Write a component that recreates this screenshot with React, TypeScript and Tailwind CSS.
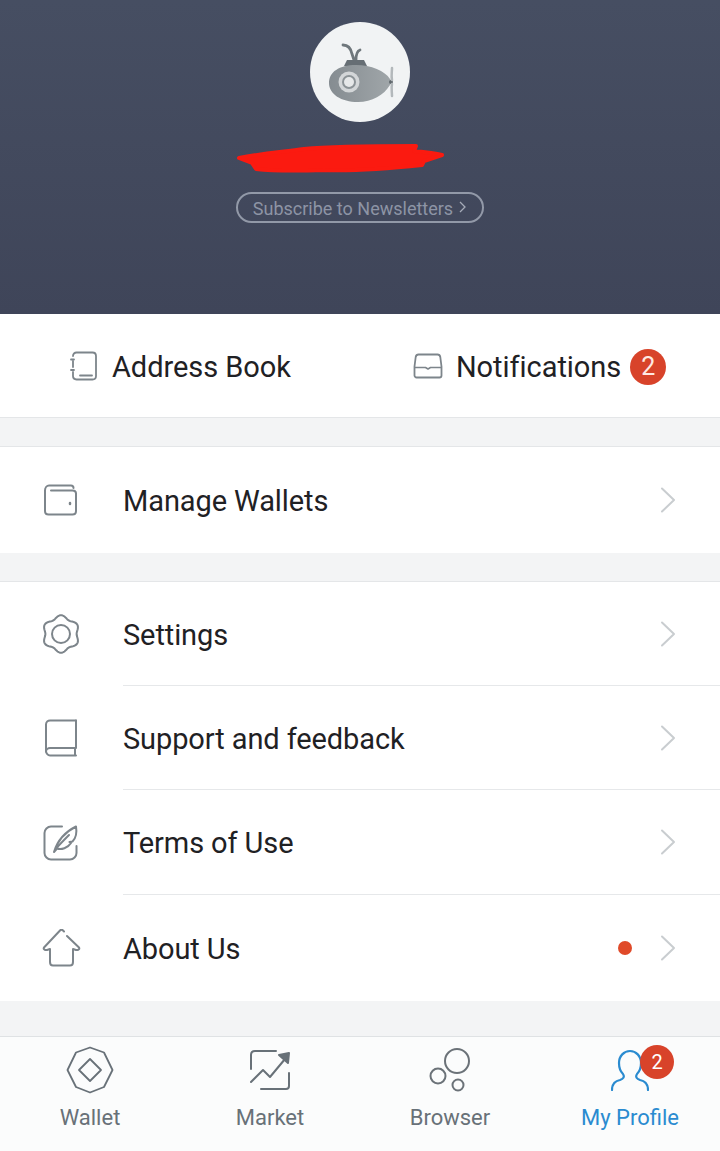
import type { ReactNode } from 'react';

const iconProps = {
    fill: 'none',
    stroke: '#7d858b',
    strokeWidth: 2,
    strokeLinecap: 'round' as const,
    strokeLinejoin: 'round' as const,
};

// six soft lobes, same outline as the settings gear
const gearPoints = Array.from({ length: 96 }, (_, i) => {
    const a = (i / 96) * Math.PI * 2;
    const r = 17.2 + 1.6 * Math.cos(6 * a);
    return `${(20 + r * Math.sin(a)).toFixed(2)},${(20 - r * Math.cos(a)).toFixed(2)}`;
}).join(' ');

function Submarine() {
    return (
        <svg width="74" height="70" viewBox="0 0 74 70">
            <defs>
                <linearGradient id="hull" x1="0" y1="0" x2="1" y2="0">
                    <stop offset="0" stopColor="#858c91" />
                    <stop offset="1" stopColor="#a0a6a9" />
                </linearGradient>
            </defs>
            <path d="M20 8c5 0 8 4 9 9l2 6M37 13c-3 1-4 4-4 10" fill="none" stroke="#6f777c" strokeWidth="2.800" strokeLinecap="round" />
            <path d="M24 23h17l3 6H21z" fill="#666e74" />
            <path d="M6 46c0-11 10-18 27-18 15 0 29 6 34 14 2 2 1 5 0 6-6 10-18 17-32 17C18 65 6 57 6 46z" fill="url(#hull)" />
            <circle cx="26" cy="45" r="10.500" fill="#d3d6d8" />
            <circle cx="26" cy="45" r="7" fill="#8c9397" />
            <circle cx="26" cy="45" r="5" fill="#e6e8e9" />
            <circle cx="68" cy="45" r="2" fill="#5f676c" />
            <path d="M69 43c-1-4 0-8 0-12M69 47c-1 4 0 8 0 12" fill="none" stroke="#b3b8bb" strokeWidth="2.500" strokeLinecap="round" />
        </svg>
    );
}

function Scribble() {
    return (
        <svg width="212" height="36" viewBox="0 0 212 36">
            <path d="M5 18C30 13 50 12 70 9c30-3 80-3 112-3l-2 5c10 1 20 2 28 4l-18 6-2 4c-38 4-68 6-98 5-30 1-50 1-68-1l-4-6z" fill="#fb1a10" stroke="#fb1a10" strokeWidth="4" strokeLinejoin="round" />
        </svg>
    );
}

function AddressIcon() {
    return (
        <svg width="30" height="30" viewBox="0 0 30 30" {...iconProps} strokeWidth={1.8}>
            <path d="M4 5c0-2 1.500-3.500 3.500-3.500h16c2 0 3.500 1.500 3.500 3.500v20c0 2-1.500 3.500-3.500 3.500h-16C5.500 28.500 4 27 4 25v-4M4 16v-6" />
            <path d="M11 24.500h12M2 8.500h3M2 19h3" />
        </svg>
    );
}

function InboxIcon() {
    return (
        <svg width="30" height="26" viewBox="0 0 30 26" {...iconProps} strokeWidth={1.8}>
            <path d="M5.500 1.500h19c1.500 0 2.500 1 2.800 2.500l1.200 9.500v9c0 1-1 2-2 2h-23c-1 0-2-1-2-2v-9L2.700 4c.3-1.500 1.300-2.500 2.800-2.500z" />
            <path d="M2 14.500h10.500l2.500 1.500 2.500-1.500H28" strokeWidth="1.500" />
        </svg>
    );
}

function WalletIcon() {
    return (
        <svg width="36" height="32" viewBox="0 0 36 32" {...iconProps}>
            <path d="M6 1.500h22c1.500 0 2.500 1 2.500 2.500M2 6.500C2 3.500 4 1.500 6 1.500M2 6.500V27c0 2 1.500 3.500 3.500 3.500h24c2 0 3.500-1.500 3.500-3.500V9.500c0-2-1.500-3-3.500-3H8" />
            <path d="M27 19v1" strokeWidth="2.500" />
        </svg>
    );
}

function GearIcon() {
    return (
        <svg width="40" height="40" viewBox="0 0 40 40" {...iconProps}>
            <polygon points={gearPoints} />
            <circle cx="20" cy="20" r="9" />
        </svg>
    );
}

function BookIcon() {
    return (
        <svg width="34" height="38" viewBox="0 0 34 38" {...iconProps}>
            <path d="M32 1.500H6c-2 0-4 1.500-4 4V32c0 2.500 2 4.500 4 4.500h26" />
            <path d="M32 1.500V29H6c-2 0-4 1.500-4 3.500M31 29v7" />
        </svg>
    );
}

function QuillIcon() {
    return (
        <svg width="36" height="36" viewBox="0 0 36 36" {...iconProps}>
            <path d="M19 1.500H8c-3.500 0-6.500 3-6.500 6.500v20c0 3.500 3 6.500 6.500 6.500h19c3.500 0 6.500-3 6.500-6.500V21" />
            <path d="M11 27c3-10 9-19 22-25.500 1 6-.5 12-3.500 15l-3 .5 1.500 1c-3 5-10 7-14 5.500L11 27zM13.500 23C18 18 22 14 26 10" />
        </svg>
    );
}

function HouseIcon() {
    return (
        <svg width="40" height="38" viewBox="0 0 40 38" {...iconProps}>
            <path d="M26 7l12 11.500c1 1.500-1 3-3 2.500l-3-1V33c0 2-1 3.500-3 3.500H12c-2 0-3-1.500-3-3.500V20l-3 1c-2 .5-4-1-3-2.500L19 1.500c1-1 2-1 3 0l1 1" />
        </svg>
    );
}

function Chevron() {
    return (
        <svg width="18" height="26" viewBox="0 0 18 26" fill="none" stroke="#c9cdd0" strokeWidth="2" strokeLinecap="round" strokeLinejoin="round">
            <path d="M3 1.500L15 13 3 24.500" />
        </svg>
    );
}

function Row({ icon, label, divider, dot, h }: { icon: ReactNode; label: string; divider?: boolean; dot?: boolean; h: string }) {
    return (
        <div className={`flex ${h}`}>
            <div className="w-[123px] flex items-center justify-center pr-[1px] shrink-0">
                <div className="w-[40px] flex justify-center mr-[1px]">{icon}</div>
            </div>
            <div className={`flex-1 flex items-center pr-[43px] ${divider ? 'border-b border-[#e6e8ea]' : ''}`}>
                <span className="text-[29px] tracking-[-0.1px] text-[#1f2124] flex-1 pt-[4px]">{label}</span>
                {dot && <span className="w-[14px] h-[14px] rounded-full bg-[#e04a29] mr-[27px]" />}
                <Chevron />
            </div>
        </div>
    );
}

function Tab({ icon, label, active, badge }: { icon: ReactNode; label: string; active?: boolean; badge?: boolean }) {
    return (
        <div className="flex-1 flex flex-col items-center pt-[8px]">
            <div className="relative h-[50px] flex items-center justify-center">
                {icon}
                {badge && (
                    <span className="absolute left-[29px] top-[0px] w-[34px] h-[34px] rounded-full bg-[#d8432a] text-white text-[20px] flex items-center justify-center">
                        2
                    </span>
                )}
            </div>
            <span className={`text-[22px] leading-[28px] mt-[9px] ${active ? 'text-[#2a8bd0]' : 'text-[#687178]'}`}>{label}</span>
        </div>
    );
}

export default function App() {
    return (
        <div className="w-[720px] h-[1151px] overflow-hidden flex flex-col bg-[#f3f4f5] font-['Roboto',sans-serif]">
            <div className="h-[314px] shrink-0 flex flex-col items-center pt-[22px] bg-gradient-to-b from-[#464e62] to-[#3f4559]">
                <div className="w-[100px] h-[100px] rounded-full bg-[#f1f3f4] flex items-center justify-center">
                    <Submarine />
                </div>
                <div className="mt-[18px] h-[36px] ml-[-40px]">
                    <Scribble />
                </div>
                <div className="mt-[16px] w-[248px] h-[31px] rounded-full border-2 border-[#9299a8] flex items-center justify-center gap-[6px] text-[18px] text-[#8d94a5]">
                    <span className="pt-[1px]">Subscribe to Newsletters</span>
                    <svg width="8" height="12" viewBox="0 0 8 12" fill="none" stroke="#a5abb8" strokeWidth="1.300" className="mb-[2px]">
                        <path d="M1 1l5 5-5 5" />
                    </svg>
                </div>
            </div>

            <div className="h-[104px] shrink-0 bg-white border-b border-[#e4e6e8] flex items-center text-[#1f2124] text-[29px]">
                <div className="flex items-center ml-[69px]">
                    <AddressIcon />
                    <span className="ml-[13px] pt-[4px] tracking-[-0.05px]">Address Book</span>
                </div>
                <div className="flex items-center ml-[122px]">
                    <InboxIcon />
                    <span className="ml-[13px] pt-[4px] tracking-[-0.05px]">Notifications</span>
                    <span className="ml-[9px] mt-[2px] w-[36px] h-[36px] rounded-full bg-[#d8432a] text-[#ffe9e3] text-[25px] flex items-center justify-center">2</span>
                </div>
            </div>

            <div className="h-[28px] shrink-0" />

            <div className="shrink-0 bg-white border-t border-[#e4e6e8]">
                <Row icon={<WalletIcon />} label="Manage Wallets" h="h-[106px]" />
            </div>

            <div className="h-[28px] shrink-0" />

            <div className="shrink-0 bg-white border-t border-[#e4e6e8]">
                <Row icon={<GearIcon />} label="Settings" divider h="h-[104px]" />
                <Row icon={<BookIcon />} label="Support and feedback" divider h="h-[104px]" />
                <Row icon={<QuillIcon />} label="Terms of Use" divider h="h-[105px]" />
                <Row icon={<HouseIcon />} label="About Us" dot h="h-[106px]" />
            </div>

            <div className="h-[35px] shrink-0" />

            <div className="flex-1 bg-[#fbfcfc] border-t border-[#dfe2e4] flex">
                <Tab
                    label="Wallet"
                    icon={
                        <svg width="48" height="48" viewBox="0 0 48 48" fill="none" stroke="#687178" strokeWidth="1.800" strokeLinejoin="round">
                            <path d="M24 1.500l14 5 8.500 17.500-8.500 17-14 5.500-14-5.500L1.500 24 10 6.500z" />
                            <path d="M24 13l11 11-11 11-11-11z" />
                        </svg>
                    }
                />
                <Tab
                    label="Market"
                    icon={
                        <svg width="42" height="42" viewBox="0 0 42 42" fill="none" stroke="#687178" strokeWidth="2" strokeLinecap="round" strokeLinejoin="round">
                            <path d="M27 2H6C3.500 2 2 3.500 2 6v14M12 40h25c2 0 3-1 3-3V24" />
                            <path d="M2 33l12-12 7 7 15-18" />
                            <path d="M30 6l10-2-1 10z" fill="#687178" />
                        </svg>
                    }
                />
                <Tab
                    label="Browser"
                    icon={
                        <svg width="42" height="46" viewBox="0 0 42 46" fill="none" stroke="#6b7278" strokeWidth="2">
                            <circle cx="28" cy="14" r="12" />
                            <circle cx="9" cy="29" r="7.500" />
                            <circle cx="29" cy="38" r="5.500" />
                        </svg>
                    }
                />
                <Tab
                    label="My Profile"
                    active
                    badge
                    icon={
                        <svg width="38" height="42" viewBox="0 0 38 42" fill="none" stroke="#2a8bd0" strokeWidth="2.200" strokeLinecap="round">
                            <path d="M1 41c0-6 3-9 8-10 3-1 5-3 3-6-3-3-4-7-4-11C8 7 13 2 19 2s11 5 11 12c0 4-1 8-4 11-2 3 0 5 3 6 5 1 8 4 8 10" />
                        </svg>
                    }
                />
            </div>
        </div>
    );
}
